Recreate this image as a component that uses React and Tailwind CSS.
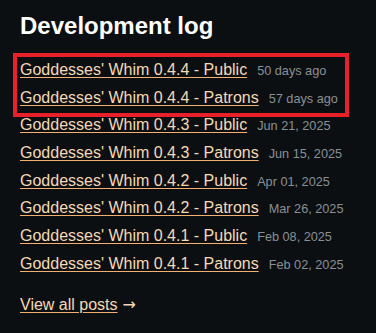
import React from "react";

const posts = [
  ["Goddesses' Whim 0.4.4 - Public", "50 days ago"],
  ["Goddesses' Whim 0.4.4 - Patrons", "57 days ago"],
  ["Goddesses' Whim 0.4.3 - Public", "Jun 21, 2025"],
  ["Goddesses' Whim 0.4.3 - Patrons", "Jun 15, 2025"],
  ["Goddesses' Whim 0.4.2 - Public", "Apr 01, 2025"],
  ["Goddesses' Whim 0.4.2 - Patrons", "Mar 26, 2025"],
  ["Goddesses' Whim 0.4.1 - Public", "Feb 08, 2025"],
  ["Goddesses' Whim 0.4.1 - Patrons", "Feb 02, 2025"],
];

export default function App() {
  return (
    <div
      className="relative w-[376px] h-[333px] bg-[#0b0f12] px-[20px] pt-[14px] overflow-hidden"
      style={{ fontFamily: '"Liberation Sans", Arial, sans-serif' }}
    >
      <h2 className="text-[24px] leading-[24px] font-bold text-white">Development log</h2>
      <ul className="mt-[18px]">
        {posts.map(([title, date], i) => (
          <li key={i} className="flex items-baseline h-[27.67px] pt-[4px] whitespace-nowrap">
            <a className="text-[16px] leading-[20px] text-[#f6d9b4] underline decoration-[#f2b072] underline-offset-[2px]">
              {title}
            </a>
            <span className="ml-[10px] text-[12.7px] leading-[16px] text-[#8a8f95]">{date}</span>
          </li>
        ))}
      </ul>
      <div className="mt-[16px] flex items-baseline leading-[24px] text-[16px] text-[#f6d9b4]">
        <a className="underline decoration-[#f2b072] underline-offset-[2px]">View all posts</a>
        <span className="ml-[5px]" style={{ fontFamily: '"DejaVu Sans", sans-serif' }}>→</span>
      </div>
      <div className="absolute left-[13px] top-[53px] w-[336px] h-[64px] border-[4px] border-[#e8202a] pointer-events-none" />
    </div>
  );
}
